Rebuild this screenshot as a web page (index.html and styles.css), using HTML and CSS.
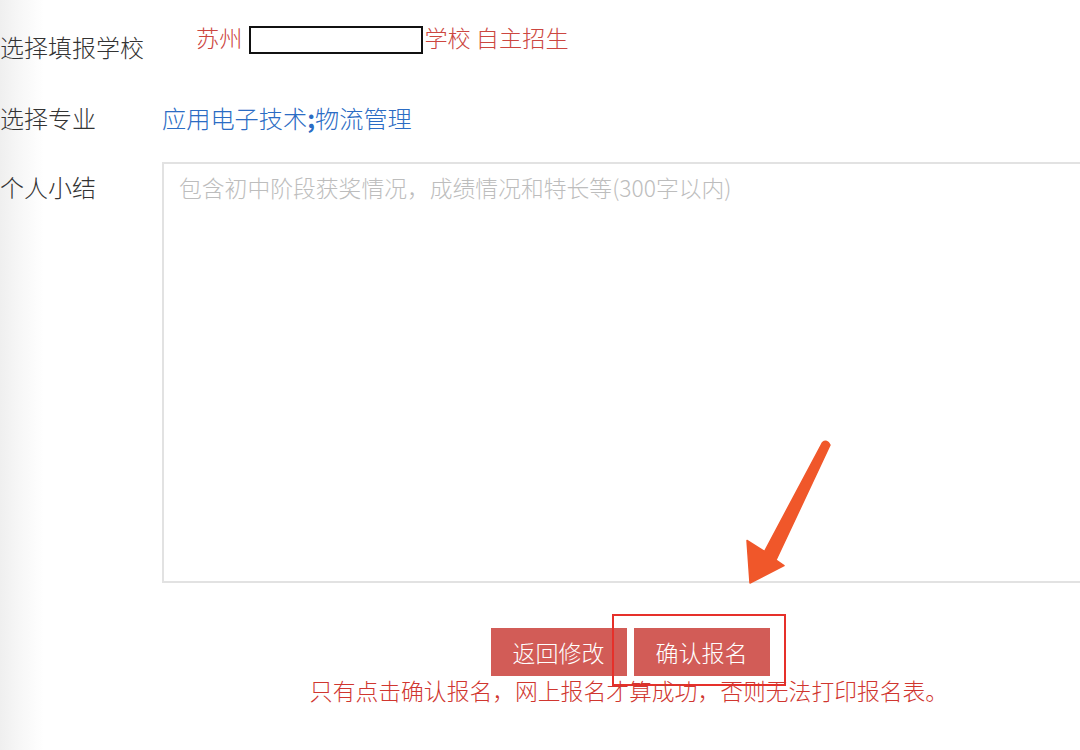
FILE: index.html
```html
<!DOCTYPE html>
<html lang="zh-CN">
<head>
<meta charset="utf-8">
<title>确认报名</title>
<link rel="stylesheet" href="styles.css">
</head>
<body>
<div class="page">
  <div class="form">
    <div class="row row-school">
      <div class="label label-school">选择填报学校</div>
      <div class="value school">苏州<span class="redact"></span>学校 自主招生</div>
    </div>
    <div class="row row-major">
      <div class="label">选择专业</div>
      <div class="value major">应用电子技术<b>;</b>物流管理</div>
    </div>
    <div class="row row-summary">
      <div class="label label-summary">个人小结</div>
      <textarea class="summary" placeholder="包含初中阶段获奖情况，成绩情况和特长等(300字以内)"></textarea>
    </div>
    <div class="actions">
      <div class="buttons">
        <button class="btn">返回修改</button>
        <span class="confirm-wrap">
          <button class="btn">确认报名</button>
          <span class="highlight"></span>
        </span>
      </div>
      <p class="note">只有点击确认报名，网上报名才算成功，否则无法打印报名表。</p>
    </div>
  </div>
  <svg class="arrow" width="100" height="150" viewBox="740 436 100 150">
    <path d="M822.5,442.5 Q827,439 830,445 L776,560 L784,565.5 L750,583 L747,540.5 L764.5,551.5 Z" fill="#f0572a" stroke="#f0572a" stroke-width="1.5" stroke-linejoin="round"/>
  </svg>
</div>
</body>
</html>
```

FILE: styles.css
```css
html, body {
  margin: 0;
  padding: 0;
}
body {
  width: 1080px;
  height: 750px;
  overflow: hidden;
  background: linear-gradient(to right, #efefef 0px, #f7f7f7 20px, #ffffff 44px);
  font-family: "Noto Sans CJK SC", "Noto Sans", sans-serif;
  font-weight: 300;
  color: #333;
}
.page {
  position: relative;
  width: 1080px;
  height: 750px;
}
.form {
  width: 1090px;
  display: flex;
  flex-direction: column;
}
.row {
  display: flex;
  align-items: flex-start;
}
.label {
  width: 162px;
  flex: none;
  font-size: 24px;
  line-height: 32px;
  color: #333;
}
.value {
  font-size: 23px;
  line-height: 32px;
}
.row-school {
  height: 79px;
}
.label-school {
  margin-top: 31px;
}
.school {
  margin-top: 21px;
  padding-left: 34px;
  color: #cc4640;
  font-size: 23.2px;
}
.redact {
  display: inline-block;
  width: 170px;
  height: 24px;
  border: 2px solid #111;
  background: #fff;
  vertical-align: middle;
  margin: -2px 1px 0 7px;
}
.row-major {
  margin-top: 23px;
  height: 37px;
}
.major {
  color: #2b6cc4;
  font-size: 24.2px;
}
.major b {
  font-weight: 700;
}
.row-summary {
  margin-top: 23px;
}
.label-summary {
  margin-top: 9px;
}
.summary {
  flex: none;
  width: 928px;
  height: 421px;
  box-sizing: border-box;
  margin: 0;
  padding: 8px 15px;
  border: 2px solid #e2e2e2;
  background: #fff;
  resize: none;
  font-family: "Noto Sans CJK SC", "Noto Sans", sans-serif;
  font-weight: 300;
  font-size: 22.8px;
  line-height: 32px;
  color: #333;
  outline: none;
}
.summary::placeholder {
  color: #bdbdbd;
}
.actions {
  margin-left: 162px;
  width: 928px;
  display: flex;
  flex-direction: column;
  align-items: center;
}
.buttons {
  margin-top: 45px;
  display: flex;
  gap: 7px;
  transform: translateX(4px);
}
.confirm-wrap {
  position: relative;
  display: flex;
}
.btn {
  width: 136px;
  height: 48px;
  border: none;
  margin: 0;
  padding: 0;
  background: #d25c57;
  color: #fff;
  font-family: "Noto Sans CJK SC", "Noto Sans", sans-serif;
  font-weight: 300;
  font-size: 23px;
  line-height: 48px;
}
.highlight {
  position: absolute;
  left: -22px;
  top: -14px;
  width: 170px;
  height: 68px;
  border: 2px solid #e6302a;
}
.note {
  margin: 1px 0 0;
  font-size: 22.8px;
  line-height: 28px;
  color: #d0362f;
  transform: translateX(3px);
}
.arrow {
  position: absolute;
  left: 740px;
  top: 436px;
}
```
